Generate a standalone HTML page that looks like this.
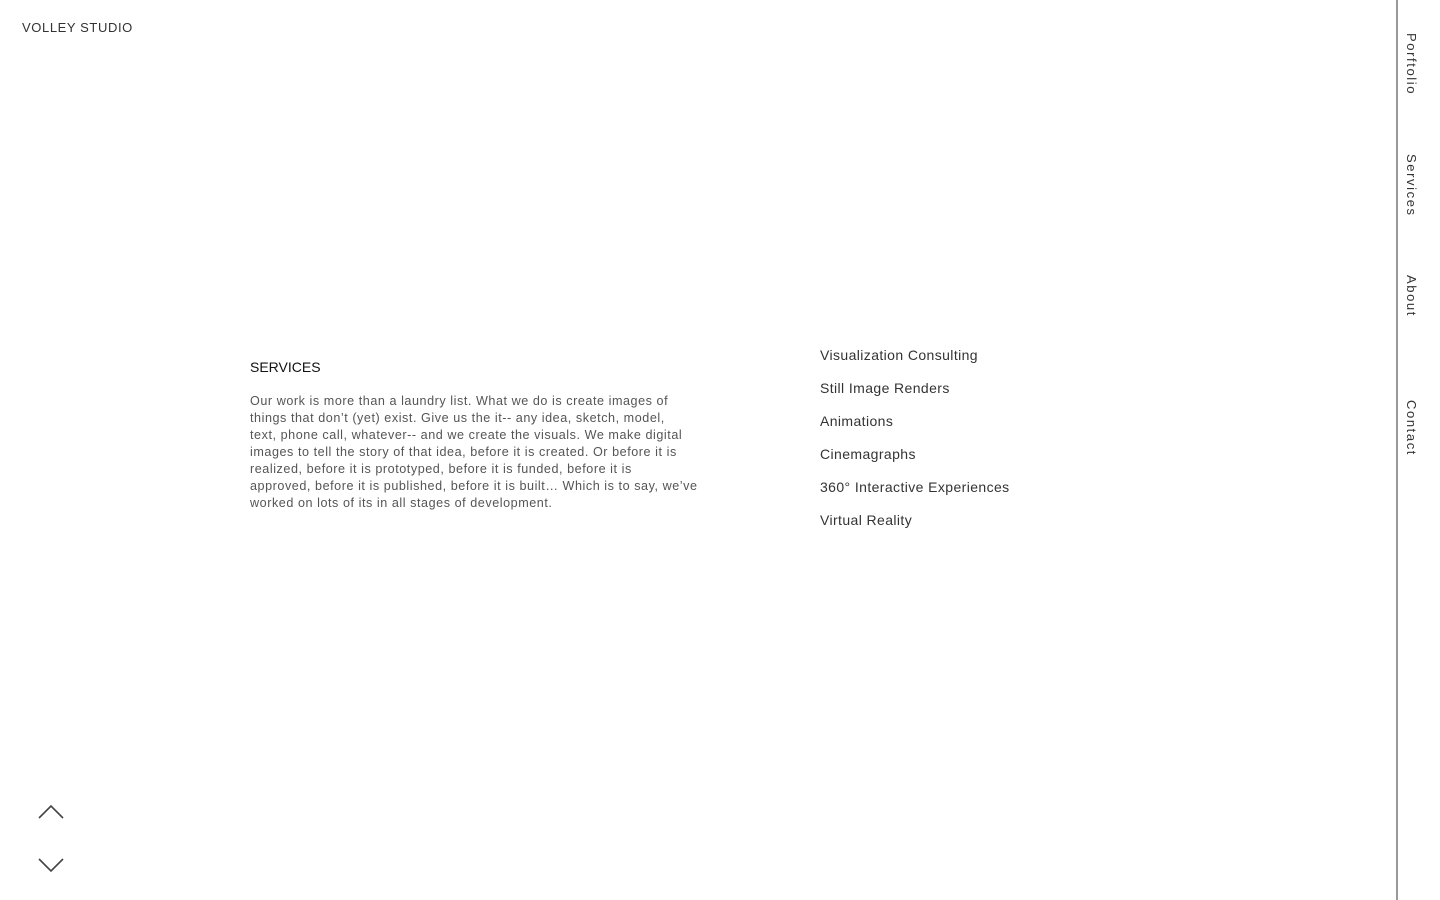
<!DOCTYPE html>
<html><head><meta charset="utf-8"><style>
body{margin:0;width:1440px;height:900px;background:#fff;position:relative;overflow:hidden;font-family:"Liberation Sans",sans-serif;}
.logo{position:absolute;left:22px;top:20px;font-size:13px;letter-spacing:0.6px;color:#333;}
.h{position:absolute;left:250px;top:359px;font-size:14px;color:#111;}
.p{position:absolute;left:250px;top:393px;white-space:nowrap;font-size:12.6px;line-height:17px;color:#555;letter-spacing:0.55px;}
.list{position:absolute;left:820px;top:347px;font-size:14px;color:#333;letter-spacing:0.4px;}
.list div{height:33px;}
.line{position:absolute;left:1396px;top:0;width:2px;height:900px;background:#999;}
.nav{position:absolute;left:1404px;font-size:13px;letter-spacing:1.6px;color:#333;writing-mode:vertical-rl;}
</style></head><body>
<div class="logo">VOLLEY STUDIO</div>
<div class="h">SERVICES</div>
<div class="p">Our work is more than a laundry list. What we do is create images of<br>things that don’t (yet) exist. Give us the it-- any idea, sketch, model,<br>text, phone call, whatever-- and we create the visuals. We make digital<br>images to tell the story of that idea, before it is created. Or before it is<br>realized, before it is prototyped, before it is funded, before it is<br>approved, before it is published, before it is built… Which is to say, we’ve<br>worked on lots of its in all stages of development.</div>
<div class="list"><div>Visualization Consulting</div><div>Still Image Renders</div><div>Animations</div><div>Cinemagraphs</div><div>360° Interactive Experiences</div><div>Virtual Reality</div></div>
<div class="line"></div>
<div class="nav" style="top:33px">Porftolio</div>
<div class="nav" style="top:154px">Services</div>
<div class="nav" style="top:275px">About</div>
<div class="nav" style="top:400px">Contact</div>
<svg style="position:absolute;left:38px;top:803px" width="26" height="16"><path d="M1 15 L13 3 L25 15" fill="none" stroke="#444" stroke-width="1.6"/></svg>
<svg style="position:absolute;left:38px;top:857px" width="26" height="16"><path d="M1 2 L13 14 L25 2" fill="none" stroke="#444" stroke-width="1.6"/></svg>
</body></html>
